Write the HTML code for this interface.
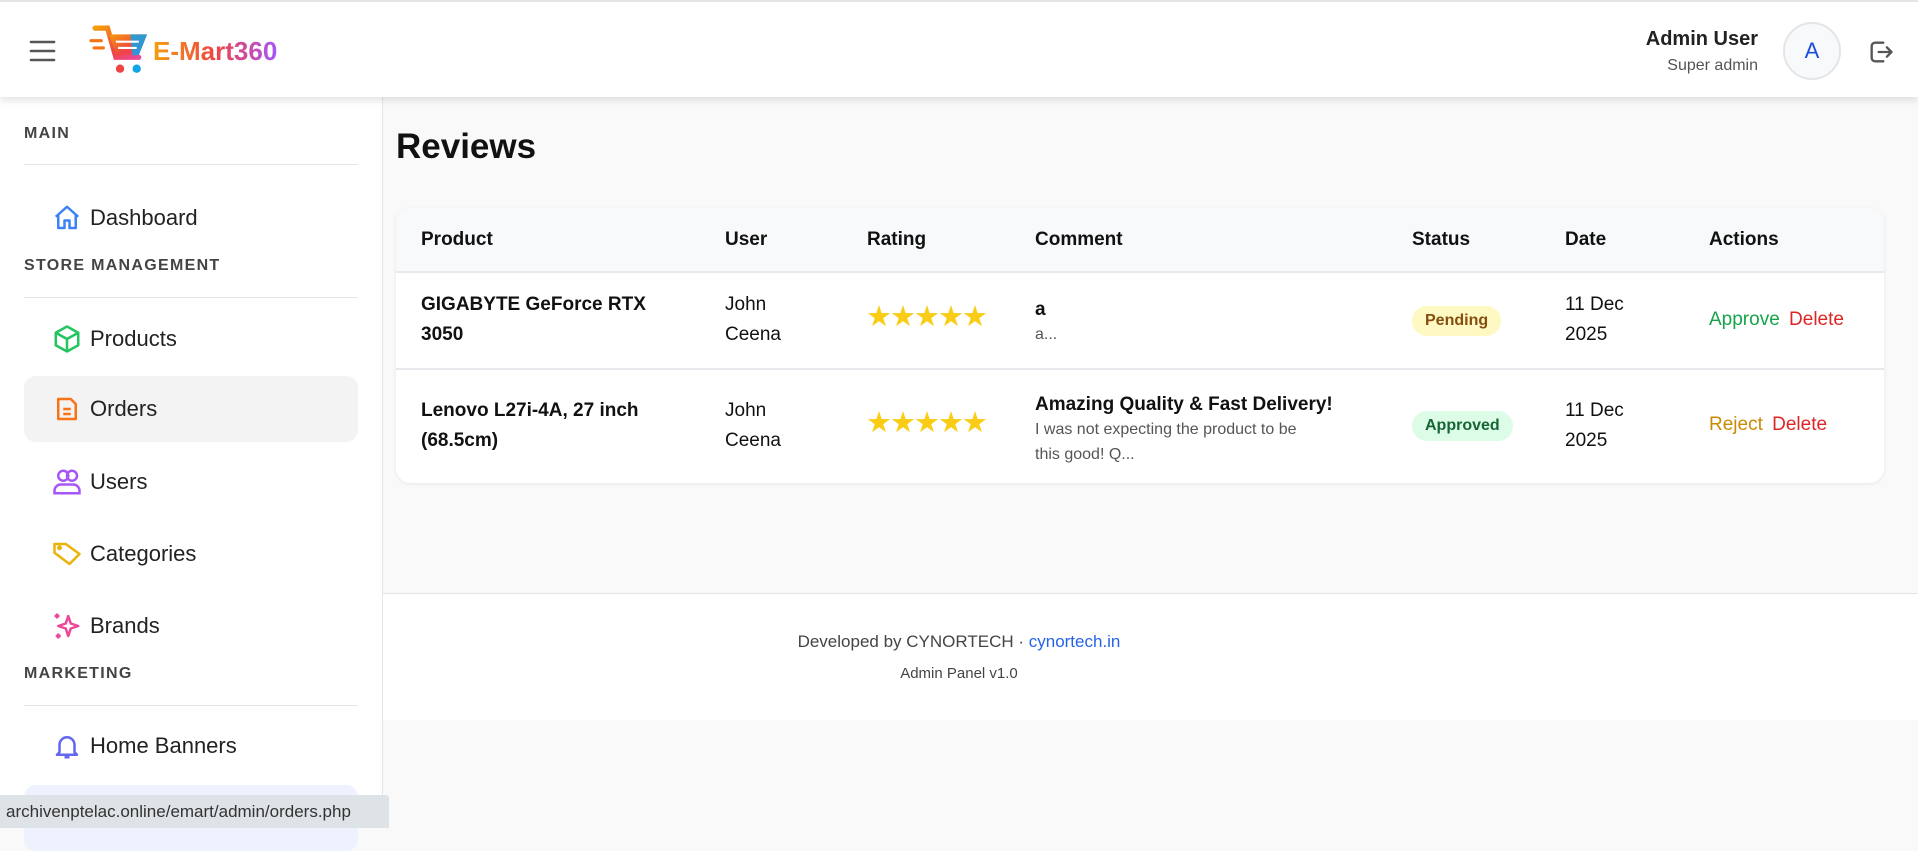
<!DOCTYPE html>
<html><head><meta charset="utf-8"><style>
*{margin:0;padding:0;box-sizing:border-box}
body{width:1918px;height:828px;overflow:hidden;background:#f9f9f9;font-family:"Liberation Sans","DejaVu Sans",sans-serif;color:#111;position:relative}
.abs{position:absolute}
.hdr{left:0;top:0;width:1918px;height:97px;background:#fff;border-top:2px solid #e5e5e5;box-shadow:0 3px 8px rgba(0,0,0,.12);z-index:3}
.side{left:0;top:97px;width:383px;height:731px;background:#fff;border-right:1px solid #e6e6e6;z-index:2}
.lbl{position:absolute;left:24px;font-size:16px;font-weight:bold;letter-spacing:1.3px;color:#444}
.hr{position:absolute;left:24px;width:334px;height:1px;background:#e5e5e5}
.item{position:absolute;left:24px;width:334px;height:66px;border-radius:12px}
.item span{position:absolute;left:66px;top:50%;transform:translateY(-50%);font-size:22px;color:#222}
.item svg{position:absolute;left:28px;top:50%;transform:translateY(-50%)}
.card{left:396px;top:208px;width:1488px;height:275px;background:#fff;border-radius:15px;box-shadow:0 1px 4px rgba(0,0,0,.07);overflow:hidden}
.th{position:absolute;top:0;height:64px;line-height:64px;font-size:19px;font-weight:bold}
.row{position:absolute;left:0;width:1488px;border-top:2px solid #e8e9ec}
.c{position:absolute;font-size:19px;line-height:30px}
.stars{color:#facc15;font-size:29px;letter-spacing:-2px}
.pill{position:absolute;height:30px;line-height:30px;border-radius:15px;font-size:16px;font-weight:bold;padding:0 13px}
</style></head><body>
<div class="abs hdr">
 <svg class="abs" style="left:29px;top:37px" width="27" height="24" viewBox="0 0 27 24"><g stroke="#555" stroke-width="2.6" stroke-linecap="round"><line x1="2" y1="3" x2="25" y2="3"/><line x1="2" y1="12" x2="25" y2="12"/><line x1="2" y1="21" x2="25" y2="21"/></g></svg>
 <svg class="abs" style="left:88px;top:22px" width="62" height="52" viewBox="0 0 58 50"><defs><linearGradient id="g" x1="0" y1="0" x2="1" y2="1"><stop offset="0" stop-color="#f59e0b"/><stop offset=".6" stop-color="#ef4444"/><stop offset="1" stop-color="#ec4899"/></linearGradient></defs>
 <path d="M6 4h12l8 28h22" fill="none" stroke="url(#g)" stroke-width="5" stroke-linecap="round"/>
 <path d="M20 10h36l-8 20H26z" fill="url(#g)"/><path d="M40 10h16l-8 20h-6z" fill="#0ea5e9" opacity=".85"/>
 <g stroke="#fff" stroke-width="2"><line x1="26" y1="17" x2="48" y2="17"/><line x1="28" y1="23" x2="46" y2="23"/></g>
 <g stroke="#f97316" stroke-width="3" stroke-linecap="round"><line x1="2" y1="16" x2="12" y2="16"/><line x1="5" y1="23" x2="14" y2="23"/></g>
 <circle cx="30" cy="43" r="4" fill="#ef4444"/><circle cx="46" cy="43" r="4" fill="#0ea5e9"/></svg>
 <div class="abs" style="left:153px;top:34px;font-size:26px;font-weight:bold;background:linear-gradient(90deg,#f59e0b,#ef4444 50%,#a855f7);-webkit-background-clip:text;background-clip:text;color:transparent">E-Mart360</div>
 <div class="abs" style="right:160px;top:26px;font-size:20px;font-weight:bold;color:#222;text-align:right">Admin User</div>
 <div class="abs" style="right:160px;top:55px;font-size:16px;color:#555;text-align:right">Super admin</div>
 <div class="abs" style="left:1783px;top:20px;width:58px;height:58px;border-radius:50%;background:#f8f9fa;border:2px solid #e3e5e8;text-align:center;line-height:54px;font-size:22px;color:#1d4ed8">A</div>
 <svg class="abs" style="left:1867px;top:36px" width="28" height="28" viewBox="0 0 24 24" fill="none" stroke="#555" stroke-width="2" stroke-linecap="round" stroke-linejoin="round"><path d="M14 4H7a3 3 0 0 0-3 3v10a3 3 0 0 0 3 3h7"/><path d="M10 12h11M17 8l4 4-4 4"/></svg>
</div>
<div class="abs side">
 <div class="lbl" style="top:28px">MAIN</div><div class="hr" style="top:67px"></div>
 <div class="item" style="top:88px"><svg width="30" height="30" viewBox="0 0 24 24" fill="none" stroke="#3b82f6" stroke-width="2" stroke-linejoin="round"><path d="M3 11l9-8 9 8M5 9v11h5v-6h4v6h5V9"/></svg><span>Dashboard</span></div>
 <div class="lbl" style="top:160px">STORE MANAGEMENT</div><div class="hr" style="top:200px"></div>
 <div class="item" style="top:209px"><svg width="30" height="30" viewBox="0 0 24 24" fill="none" stroke="#22c55e" stroke-width="2" stroke-linejoin="round"><path d="M12 2l9 5v10l-9 5-9-5V7z M3 7l9 5 9-5 M12 12v10"/></svg><span>Products</span></div>
 <div class="item" style="top:279px;background:#f3f3f3"><svg width="30" height="30" viewBox="0 0 24 24" fill="none" stroke="#f97316" stroke-width="2" stroke-linejoin="round"><path d="M5 4h10l4 4v12H5z M9 12h6 M9 16h6"/></svg><span>Orders</span></div>
 <div class="item" style="top:352px"><svg width="30" height="30" viewBox="0 0 24 24" fill="none" stroke="#a855f7" stroke-width="2"><circle cx="9" cy="7" r="4"/><circle cx="16" cy="7" r="4"/><path d="M2 21v-2a5 5 0 0 1 5-5h10a5 5 0 0 1 5 5v2z"/></svg><span>Users</span></div>
 <div class="item" style="top:424px"><svg width="30" height="30" viewBox="0 0 24 24" fill="none" stroke="#eab308" stroke-width="2" stroke-linejoin="round"><path d="M2 9V4h9l11 8-8 8L2 11z"/><circle cx="6" cy="7" r="1"/></svg><span>Categories</span></div>
 <div class="item" style="top:496px"><svg width="30" height="30" viewBox="0 0 24 24" fill="none" stroke="#ec4899" stroke-width="2" stroke-linejoin="round"><path d="M13 4l2 6 6 2-6 2-2 6-2-6-6-2 6-2z M4 2v4 M2 4h4 M5 18v4 M3 20h4"/></svg><span>Brands</span></div>
 <div class="lbl" style="top:568px">MARKETING</div><div class="hr" style="top:608px"></div>
 <div class="item" style="top:616px"><svg width="30" height="30" viewBox="0 0 24 24" fill="none" stroke="#6366f1" stroke-width="2" stroke-linejoin="round"><path d="M6 17V11a6 6 0 0 1 12 0v6l2 2H4z M10 21h4"/></svg><span>Home Banners</span></div>
 <div class="item" style="top:688px;background:#eef2ff"></div>
</div>
<div class="abs" style="left:0;top:795px;width:389px;height:33px;background:#dee3e7;border-top-right-radius:3px;z-index:4;font-size:17px;line-height:33px;padding-left:6px;color:#333">archivenptelac.online/emart/admin/orders.php</div>
<div class="abs" style="left:396px;top:127px;font-size:35px;font-weight:bold">Reviews</div>
<div class="abs card">
 <div class="abs" style="left:0;top:0;width:1488px;height:64px;background:#f8f9fb"></div>
 <div class="th" style="left:25px">Product</div><div class="th" style="left:329px">User</div><div class="th" style="left:471px">Rating</div><div class="th" style="left:639px">Comment</div><div class="th" style="left:1016px">Status</div><div class="th" style="left:1169px">Date</div><div class="th" style="left:1313px">Actions</div>
 <div class="row" style="top:63px;height:98px">
  <div class="c" style="left:25px;top:17px;font-weight:bold">GIGABYTE GeForce RTX<br>3050</div>
  <div class="c" style="left:329px;top:17px">John<br>Ceena</div>
  <div class="c stars" style="left:470px;top:29px">★★★★★</div>
  <div class="c" style="left:639px;top:22px;font-weight:bold">a</div>
  <div class="c" style="left:639px;top:47px;font-size:16px;color:#555">a...</div>
  <div class="pill" style="left:1016px;top:33px;background:#fef9c3;color:#854d0e">Pending</div>
  <div class="c" style="left:1169px;top:17px">11 Dec<br>2025</div>
  <div class="c" style="left:1313px;top:32px;color:#16a34a">Approve <span style="color:#dc2626;margin-left:4px">Delete</span></div>
 </div>
 <div class="row" style="top:160px;height:116px">
  <div class="c" style="left:25px;top:26px;font-weight:bold">Lenovo L27i-4A, 27 inch<br>(68.5cm)</div>
  <div class="c" style="left:329px;top:26px">John<br>Ceena</div>
  <div class="c stars" style="left:470px;top:38px">★★★★★</div>
  <div class="c" style="left:639px;top:20px;font-weight:bold">Amazing Quality &amp; Fast Delivery!</div>
  <div class="c" style="left:639px;top:47px;font-size:16px;line-height:25px;color:#555">I was not expecting the product to be<br>this good! Q...</div>
  <div class="pill" style="left:1016px;top:41px;background:#dcfce7;color:#166534">Approved</div>
  <div class="c" style="left:1169px;top:26px">11 Dec<br>2025</div>
  <div class="c" style="left:1313px;top:40px;color:#ca8a04">Reject <span style="color:#dc2626;margin-left:4px">Delete</span></div>
 </div>
</div>
<div class="abs" style="left:383px;top:593px;width:1535px;height:127px;background:#fff;border-top:1px solid #e5e5e5"></div>
<div class="abs" style="left:0;width:1918px;top:632px;text-align:center;font-size:17px;color:#444">Developed by CYNORTECH · <span style="color:#2563eb">cynortech.in</span></div>
<div class="abs" style="left:0;width:1918px;top:665px;text-align:center;font-size:15px;color:#444">Admin Panel v1.0</div>
</body></html>
